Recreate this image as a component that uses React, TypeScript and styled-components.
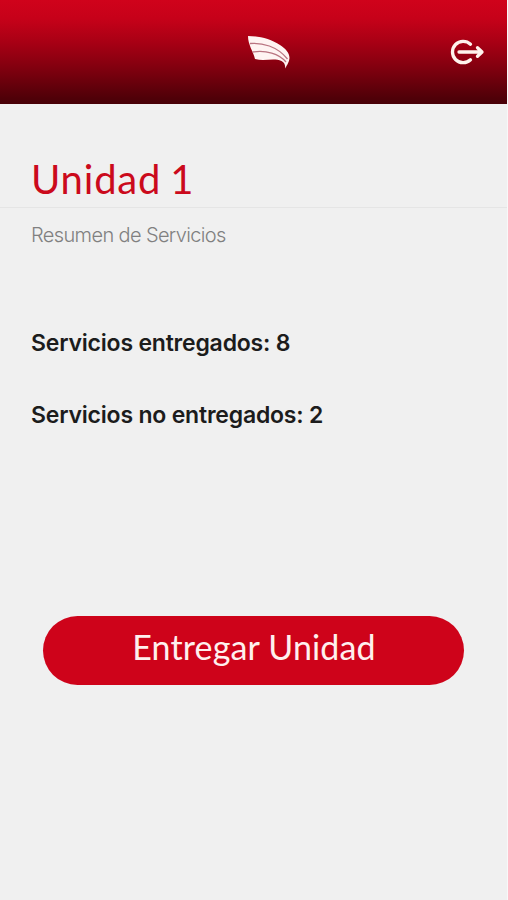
import React from "react";
import styled, { createGlobalStyle } from "styled-components";

const GlobalStyle = createGlobalStyle`
  * { box-sizing: border-box; }
  body { margin: 0; background: #f0f0f0; }
`;

const Screen = styled.div`
  display: flex;
  flex-direction: column;
  width: 508px;
  height: 900px;
  overflow: hidden;
  background: #f0f0f0;
  border-right: 1px solid #f8f8f8;
  font-family: Inter, "Liberation Sans", sans-serif;
`;

const Header = styled.header`
  display: grid;
  grid-template-columns: 1fr 44px 1fr;
  align-items: center;
  flex: none;
  height: 104px;
  padding: 0 22px 0 53px;
  background: linear-gradient(#d0021b 0%, #c60119 18%, #a60014 42%, #7b000e 69%, #500008 94%, #480007 100%);
`;

const Logo = styled.svg`
  grid-column: 2;
  display: block;
`;

const LogoutButton = styled.button`
  justify-self: end;
  display: flex;
  padding: 0;
  border: 0;
  background: none;
`;

const Title = styled.h1`
  flex: none;
  height: 104px;
  margin: 0;
  padding: 51px 0 0 31px;
  border-bottom: 1px solid #e5e5e5;
  color: #cb0a1c;
  font: 400 40px/48px Lato, sans-serif;
  letter-spacing: 0.8px;
  word-spacing: -2px;
`;

const Subtitle = styled.p`
  margin: 13px 0 0 31px;
  color: #808080;
  font-size: 20px;
  font-weight: 300;
  line-height: 28px;
  letter-spacing: -0.63px;
`;

const Summary = styled.div`
  display: flex;
  flex-direction: column;
  gap: 40px;
  margin: 78px 0 0 31px;
`;

const SummaryLine = styled.p`
  margin: 0;
  color: #1c1c1c;
  font-size: 23px;
  font-weight: 600;
  line-height: 32px;
  white-space: nowrap;
  letter-spacing: -0.2px;
`;

const DeliverButton = styled.button`
  flex: none;
  width: 421px;
  height: 69px;
  margin: 185px 0 0 43px;
  padding: 0 0 8px 1px;
  border: 0;
  border-radius: 35px;
  background: #ce031a;
  color: #fff0ee;
  font: 400 34px/40px Lato, sans-serif;
  letter-spacing: 0.15px;
`;

export default function App() {
  return (
    <Screen>
      <GlobalStyle />
      <Header>
        <Logo width="44" height="36" viewBox="0 0 44 36">
          <path d="M1 2C12 2 24 5 33 11C39 15 42.500 19 42.500 24C42 28.500 40.500 30 38.200 34.500C38.300 31 37.500 28.500 34.500 27C27 23.500 18 27.500 8 25C6 17 1 11 1 2Z" fill="#fff4f2" />
          <path d="M3 9.500C15 8.500 30 12 40.500 25M5.500 18C19 16 32 19.500 39 28" fill="none" stroke="#b97480" strokeWidth="1.300" />
        </Logo>
        <LogoutButton aria-label="Salir">
          <svg width="36" height="28" viewBox="0 0 36 28" fill="none" stroke="#fff3ed" strokeWidth="3.300" strokeLinecap="round" strokeLinejoin="round">
            <path d="M21.500 6.200A10.700 10.700 0 1 0 21.500 21.800M10 14H32.500M28.500 9.700L33 14L28.500 18.300" />
          </svg>
        </LogoutButton>
      </Header>
      <Title>Unidad 1</Title>
      <Subtitle>Resumen de Servicios</Subtitle>
      <Summary>
        <SummaryLine>Servicios entregados: 8</SummaryLine>
        <SummaryLine>Servicios no entregados: 2</SummaryLine>
      </Summary>
      <DeliverButton>Entregar Unidad</DeliverButton>
    </Screen>
  );
}
